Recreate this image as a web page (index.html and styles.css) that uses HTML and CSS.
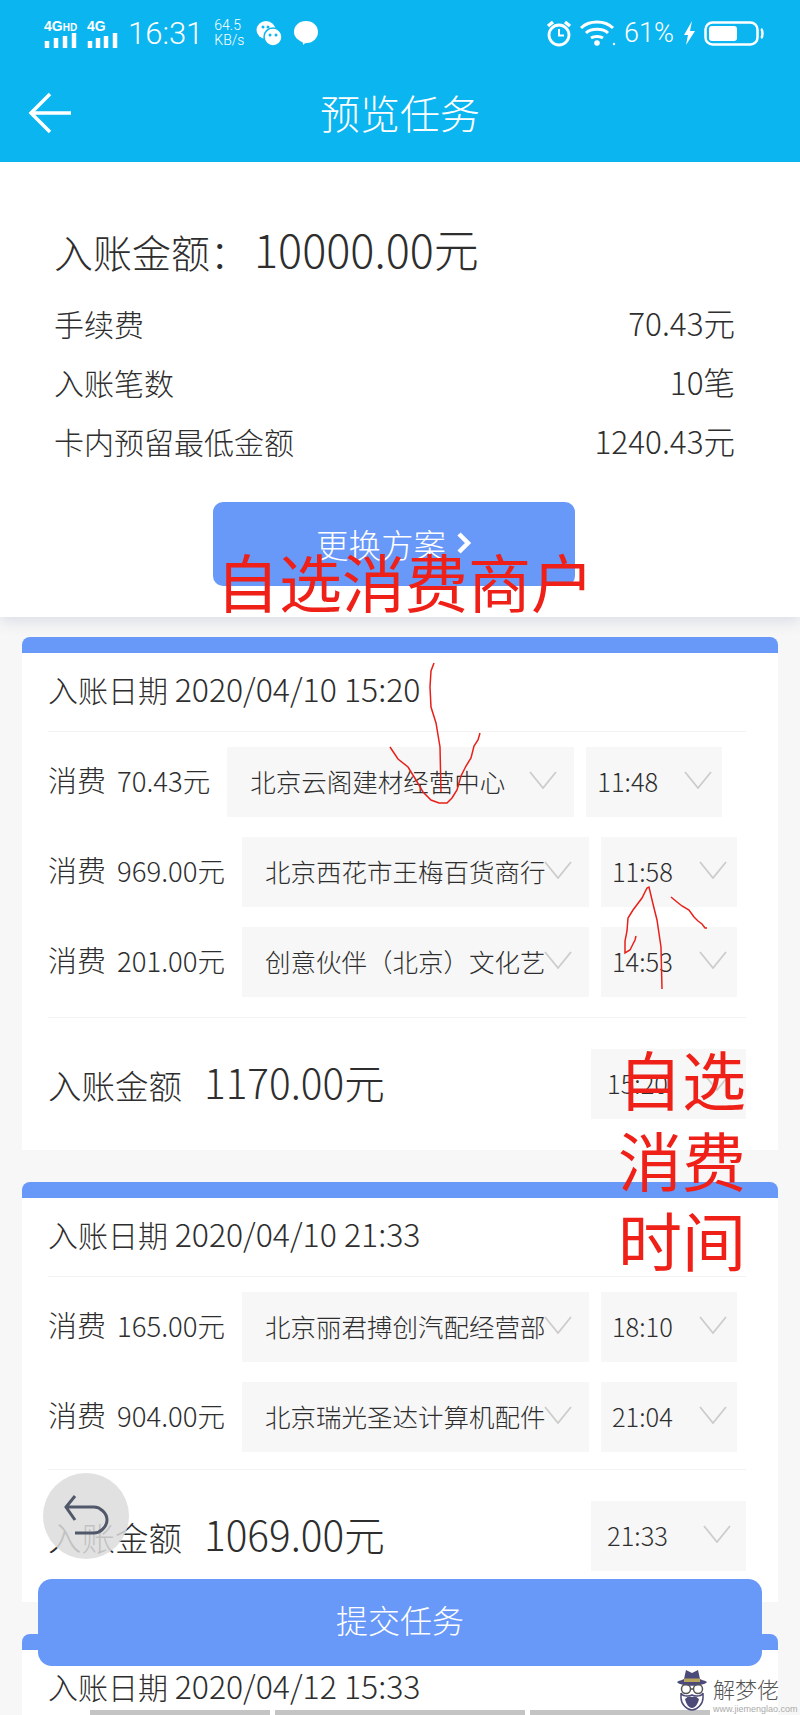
FILE: index.html
```html
<!DOCTYPE html>
<html lang="zh-CN">
<head>
  <meta charset="UTF-8">
  <title>预览任务</title>
  <link rel="stylesheet" href="styles.css">
</head>
<body>
  <div class="page">
    <div class="top-bar">
      <div class="status-bar">
        <div class="status-left">
          <div class="signal"><span class="signal-label">4G<small>HD</small></span>
            <svg width="34" height="15" viewBox="0 0 34 15"><path d="M3 15V8M12 15V5M21 15V3M30 15V0" stroke="#fff" stroke-width="4.500"/></svg>
          </div>
          <div class="signal"><span class="signal-label">4G</span>
            <svg width="32" height="15" viewBox="0 0 32 15"><path d="M3 15V8M11 15V5M19 15V3M28 15V0" stroke="#fff" stroke-width="4.500"/></svg>
          </div>
          <span class="clock">16:31</span>
          <span class="speed">64.5<br>KB/s</span>
          <svg class="wechat" width="26" height="27" viewBox="0 0 26 27"><ellipse cx="10" cy="10" rx="9.500" ry="9" fill="#fff"/><ellipse cx="17" cy="17" rx="9" ry="9" fill="#fff" stroke="#0bb5f0" stroke-width="1.500"/><circle cx="7" cy="7" r="1.500" fill="#0bb5f0"/><circle cx="12" cy="7" r="1.500" fill="#0bb5f0"/><circle cx="14" cy="15" r="1.500" fill="#0bb5f0"/><circle cx="20" cy="15" r="1.500" fill="#0bb5f0"/></svg>
          <svg class="bubble" width="26" height="26" viewBox="0 0 26 26"><path d="M13 1c7 0 12 4.700 12 11 0 6-5 11-11 11-1 0-2 0-3 1l-1 1c0-1 0-3-1-3-4-2-8-5-8-10C1 5.700 6 1 13 1z" fill="#fff"/></svg>
        </div>
        <div class="status-right">
          <svg width="26" height="27" viewBox="0 0 26 27"><circle cx="13" cy="15" r="10" fill="none" stroke="#fff" stroke-width="2.800"/><path d="M13 9v6.500h5" fill="none" stroke="#fff" stroke-width="2"/><path d="M2 6l5-4M24 6l-5-4" stroke="#fff" stroke-width="3.500"/></svg>
          <svg width="36" height="26" viewBox="0 0 36 26"><path d="M1 8c8-8 24-8 32 0M6 13c5-5 17-5 22 0M11 18c3-2 9-2 12 0" fill="none" stroke="#fff" stroke-width="3"/><circle cx="17" cy="23" r="2.800" fill="#fff"/><circle cx="34" cy="24" r="1.200" fill="#fff"/></svg>
          <span class="battery-pct">61%</span>
          <svg class="bolt" width="13" height="24" viewBox="0 0 13 24"><path d="M9 0L1 14h4l-2 10 9-14H7z" fill="#fff"/></svg>
          <svg width="60" height="25" viewBox="0 0 60 25"><rect x="1.500" y="1.500" width="52" height="22" rx="7" fill="none" stroke="#fff" stroke-width="2.500"/><rect x="5" y="5" width="28" height="15" rx="3" fill="#fff"/><path d="M57 8c2 1 2 8 0 9" fill="none" stroke="#fff" stroke-width="2.500"/></svg>
        </div>
      </div>
      <div class="nav-bar">
        <svg class="nav-back" width="44" height="42" viewBox="0 0 44 42"><path d="M22 2L3 21l19 19M3 21h40" fill="none" stroke="#fff" stroke-width="3.500"/></svg>
        <div class="nav-title">预览任务</div>
      </div>
    </div>

    <div class="summary">
      <div class="summary-total">入账金额：<span>10000.00元</span></div>
      <div class="summary-row"><span>手续费</span><span class="summary-value">70.43元</span></div>
      <div class="summary-row"><span>入账笔数</span><span class="summary-value">10笔</span></div>
      <div class="summary-row"><span>卡内预留最低金额</span><span class="summary-value">1240.43元</span></div>
      <div class="swap-btn">更换方案
        <svg width="16" height="22" viewBox="0 0 16 22"><path d="M3 2l9 9-9 9" fill="none" stroke="#fff" stroke-width="4.500"/></svg>
      </div>
    </div>

    <div class="list">
      <div class="task-card">
        <div class="card-date">入账日期 <span>2020/04/10 15:20</span></div>
        <div class="spend-list">
          <div class="spend-row">
            <div class="spend-label">消费<span>70.43元</span></div>
            <div class="picker picker-shop"><span class="picker-text">北京云阁建材经营中心</span><svg class="chev" viewBox="0 0 28 18"><path d="M1 1l13 16L27 1" fill="none" stroke="#ccc" stroke-width="1.800"/></svg></div>
            <div class="picker picker-time"><span class="picker-text">11:48</span><svg class="chev" viewBox="0 0 28 18"><path d="M1 1l13 16L27 1" fill="none" stroke="#ccc" stroke-width="1.800"/></svg></div>
          </div>
          <div class="spend-row">
            <div class="spend-label">消费<span>969.00元</span></div>
            <div class="picker picker-shop"><span class="picker-text">北京西花市王梅百货商行</span><svg class="chev" viewBox="0 0 28 18"><path d="M1 1l13 16L27 1" fill="none" stroke="#ccc" stroke-width="1.800"/></svg></div>
            <div class="picker picker-time"><span class="picker-text">11:58</span><svg class="chev" viewBox="0 0 28 18"><path d="M1 1l13 16L27 1" fill="none" stroke="#ccc" stroke-width="1.800"/></svg></div>
          </div>
          <div class="spend-row">
            <div class="spend-label">消费<span>201.00元</span></div>
            <div class="picker picker-shop"><span class="picker-text">创意伙伴（北京）文化艺</span><svg class="chev" viewBox="0 0 28 18"><path d="M1 1l13 16L27 1" fill="none" stroke="#ccc" stroke-width="1.800"/></svg></div>
            <div class="picker picker-time"><span class="picker-text">14:53</span><svg class="chev" viewBox="0 0 28 18"><path d="M1 1l13 16L27 1" fill="none" stroke="#ccc" stroke-width="1.800"/></svg></div>
          </div>
        </div>
        <div class="card-total">
          <div class="total-label">入账金额<span>1170.00元</span></div>
          <div class="picker picker-total"><span class="picker-text">15:20</span><svg class="chev" viewBox="0 0 28 18"><path d="M1 1l13 16L27 1" fill="none" stroke="#ccc" stroke-width="1.800"/></svg></div>
        </div>
      </div>

      <div class="task-card">
        <div class="card-date">入账日期 <span>2020/04/10 21:33</span></div>
        <div class="spend-list spend-list-short">
          <div class="spend-row">
            <div class="spend-label">消费<span>165.00元</span></div>
            <div class="picker picker-shop"><span class="picker-text">北京丽君搏创汽配经营部</span><svg class="chev" viewBox="0 0 28 18"><path d="M1 1l13 16L27 1" fill="none" stroke="#ccc" stroke-width="1.800"/></svg></div>
            <div class="picker picker-time"><span class="picker-text">18:10</span><svg class="chev" viewBox="0 0 28 18"><path d="M1 1l13 16L27 1" fill="none" stroke="#ccc" stroke-width="1.800"/></svg></div>
          </div>
          <div class="spend-row">
            <div class="spend-label">消费<span>904.00元</span></div>
            <div class="picker picker-shop"><span class="picker-text">北京瑞光圣达计算机配件</span><svg class="chev" viewBox="0 0 28 18"><path d="M1 1l13 16L27 1" fill="none" stroke="#ccc" stroke-width="1.800"/></svg></div>
            <div class="picker picker-time"><span class="picker-text">21:04</span><svg class="chev" viewBox="0 0 28 18"><path d="M1 1l13 16L27 1" fill="none" stroke="#ccc" stroke-width="1.800"/></svg></div>
          </div>
        </div>
        <div class="card-total">
          <div class="total-label">入账金额<span>1069.00元</span></div>
          <div class="picker picker-total"><span class="picker-text">21:33</span><svg class="chev" viewBox="0 0 28 18"><path d="M1 1l13 16L27 1" fill="none" stroke="#ccc" stroke-width="1.800"/></svg></div>
        </div>
      </div>

      <div class="task-card">
        <div class="card-date card-date-open">入账日期 <span>2020/04/12 15:33</span></div>
        <div class="stub-row">
          <div class="stub stub-a"></div>
          <div class="stub stub-b"></div>
          <div class="stub stub-a"></div>
        </div>
      </div>
    </div>

    <!-- marks drawn on top of the screenshot -->
    <svg class="scribble" width="800" height="1715" viewBox="0 0 800 1715">
      <path d="M434 663l-3 8-1 16 1 20 5 16 4 24 1 45M390 747l8 12 10 8 8 13 7 12 8 8 8 3 8 0 5-5 5-8 4-14 5-10 5-8 3-12 4-6 2-7M662 989l-1-42-4-27-4-16-4-17-2 1-5 10-9 12-5 8-1 13-2 10 0 12 5-3 2-4 3-6 1-4M671 897l6 5 5 4 7 4 5 7 4 4 4 3 3 4 2 0" fill="none" stroke="#e8201a" stroke-width="1.500"/>
    </svg>
    <div class="note note-shop">自选消费商户</div>
    <div class="note note-time">自选<br>消费<br>时间</div>

    <div class="float-back">
      <svg width="46" height="42" viewBox="0 0 46 42"><path d="M12 1L3 12l9 13M3 12h28c6 0 13 6 13 13s-7 13-13 13H12" fill="none" stroke="#50586a" stroke-width="3"/></svg>
    </div>
    <div class="submit-btn">提交任务</div>
    <div class="watermark">
      <svg width="32" height="43" viewBox="0 0 32 43"><path d="M1 14c3-2 6-2 7-3l2-9 6 3 6-3 2 9c1 1 4 1 7 3-4 5-26 5-30 0z" fill="#4b4a78"/><path d="M8 10.500h16v3.500H8z" fill="#b9a45c"/><circle cx="10" cy="21" r="4.500" fill="none" stroke="#555" stroke-width="1.500"/><circle cx="22" cy="21" r="4.500" fill="none" stroke="#555" stroke-width="1.500"/><path d="M14.500 21h3" stroke="#555" stroke-width="1.500"/><path d="M5 25v5c0 6 6 12 11 12s11-6 11-12v-5c-1 3-7 4-11 2-4 2-10 1-11-2z" fill="none" stroke="#4b4a78" stroke-width="1.500"/><path d="M9 31c3-3 5-3 7-2 2-1 4-1 7 2-1 5-4 9-7 9s-6-4-7-9z" fill="#4b4a78"/></svg>
      <div class="watermark-text">
        <div class="watermark-name">解梦佬</div>
        <div class="watermark-url">www.jiemenglao.com</div>
      </div>
    </div>
  </div>
</body>
</html>
```

FILE: styles.css
```css
* {
  box-sizing: border-box;
}
html, body {
  margin: 0;
  padding: 0;
}
body {
  background: #f7f7f7;
  color: #2e2e2e;
  font-family: "Noto Sans CJK SC", "Noto Sans", sans-serif;
  font-weight: 300;
}
.page {
  position: relative;
  width: 800px;
  height: 1715px;
  overflow: hidden;
}

/* top */
.top-bar {
  position: relative;
  z-index: 1;
  height: 162px;
  background: #0bb5f0;
  color: #fff;
}
.status-bar {
  height: 62px;
  padding: 4px 36px 0 44px;
  display: flex;
  justify-content: space-between;
  align-items: center;
}
.status-left, .status-right {
  display: flex;
  align-items: center;
  gap: 8px;
}
.signal {
  display: flex;
  flex-direction: column;
  line-height: 1;
  margin-right: 1px;
}
.signal-label {
  font-family: "Liberation Sans", sans-serif;
  font-size: 14px;
  font-weight: 700;
}
.signal-label small {
  font-size: 10px;
}
.clock {
  font-family: Roboto, sans-serif;
  font-size: 31px;
  font-weight: 300;
}
.speed {
  font-family: Roboto, sans-serif;
  font-size: 14px;
  line-height: 15px;
  margin: 0 4px 0 3px;
}
.bubble {
  margin-left: 3px;
}
.battery-pct {
  font-family: Roboto, sans-serif;
  font-size: 27px;
  font-weight: 300;
}
.bolt {
  margin-left: 1px;
}
.nav-bar {
  height: 100px;
  position: relative;
  display: flex;
  align-items: center;
  justify-content: center;
}
.nav-back {
  position: absolute;
  left: 28px;
  top: 30px;
}
.nav-title {
  font-size: 40px;
}

/* summary */
.summary {
  background: #fff;
  height: 455px;
  padding: 57px 65px 0 54px;
  box-shadow: 0 4px 14px #d8dce4;
  position: relative;
}
.summary-total {
  font-size: 39px;
  line-height: 60px;
  margin-bottom: 12px;
}
.summary-total span {
  font-size: 45px;
  margin-left: 5px;
}
.summary-row {
  display: flex;
  justify-content: space-between;
  align-items: baseline;
  font-size: 30px;
  line-height: 58px;
}
.summary-value {
  font-size: 31.500px;
}
.swap-btn {
  position: absolute;
  left: 213px;
  top: 340px;
  width: 362px;
  height: 84px;
  padding-bottom: 2px;
  background: #6898f8;
  border-radius: 10px;
  color: #fff;
  font-size: 32.500px;
  display: flex;
  align-items: center;
  justify-content: center;
  gap: 10px;
}

/* cards */
.list {
  padding: 20px 22px 0;
  display: flex;
  flex-direction: column;
  gap: 32px;
}
.task-card {
  background: #fff;
  border-top: 16px solid #6898f8;
  border-radius: 8px 8px 0 0;
  padding: 0 32px 31px 26px;
}
.card-date {
  height: 79px;
  font-size: 30px;
  line-height: 71px;
  border-bottom: 1px solid #f2f2f2;
}
.card-date span {
  font-size: 32px;
}
.card-date-open {
  height: 60px;
  border-bottom: 0;
}
.spend-list {
  padding: 15px 0 20px;
  display: flex;
  flex-direction: column;
  gap: 20px;
  border-bottom: 1px solid #f2f2f2;
}
.spend-list-short {
  padding-bottom: 17px;
}
.spend-row {
  display: flex;
  align-items: center;
  gap: 17px;
}
.spend-label {
  font-size: 29px;
  line-height: 64px;
  height: 70px;
  flex: none;
}
.spend-label span {
  font-size: 27.500px;
  margin-left: 11px;
}
.picker {
  height: 70px;
  padding-bottom: 4px;
  background: #f7f7f7;
  display: flex;
  align-items: center;
  flex: none;
  font-size: 25.500px;
}
.picker-text {
  flex: 1;
  min-width: 0;
  white-space: nowrap;
}
.picker-shop {
  width: 347px;
  padding-left: 23px;
  padding-right: 17px;
}
.picker-time {
  width: 136px;
  margin-left: -5px;
  padding-left: 11px;
  padding-right: 10px;
}
.picker-total {
  width: 155px;
  padding-left: 16px;
  padding-right: 15px;
}
.chev {
  width: 28px;
  height: 18px;
  flex: none;
}
.card-total {
  display: flex;
  justify-content: space-between;
  align-items: center;
  padding-top: 31px;
}
.total-label {
  font-size: 33.500px;
  padding-bottom: 6px;
}
.total-label span {
  font-size: 40.500px;
  margin-left: 22px;
}
.stub-row {
  display: flex;
  justify-content: center;
  gap: 5px;
  padding-left: 6px;
}
.stub {
  height: 6px;
  background: #c4c4c4;
}
.stub-a {
  width: 180px;
}
.stub-b {
  width: 250px;
}

/* things lying over the page */
.scribble {
  position: absolute;
  z-index: 2;
  left: 0;
  top: 0;
}
.note {
  position: absolute;
  z-index: 2;
  color: #ee2018;
  font-weight: 400;
}
.note-shop {
  left: 216px;
  top: 540px;
  font-size: 63px;
  line-height: 80px;
  white-space: nowrap;
}
.note-time {
  left: 618px;
  top: 1037px;
  font-size: 64px;
  line-height: 80.500px;
}
.float-back {
  position: absolute;
  z-index: 2;
  left: 43px;
  top: 1473px;
  width: 86px;
  height: 86px;
  border-radius: 50%;
  background: #dcdcdcd8;
  display: flex;
  align-items: center;
  justify-content: center;
}
.submit-btn {
  position: absolute;
  z-index: 2;
  left: 38px;
  top: 1579px;
  width: 724px;
  height: 87px;
  padding-bottom: 7px;
  border-radius: 14px;
  background: #6898f8;
  color: #fff;
  font-size: 32px;
  display: flex;
  align-items: center;
  justify-content: center;
}
.watermark {
  position: absolute;
  z-index: 2;
  left: 676px;
  top: 1668px;
  display: flex;
  gap: 5px;
  color: #555;
}
.watermark-name {
  font-size: 22px;
  line-height: 32px;
  margin-top: 4px;
}
.watermark-url {
  font-family: "Liberation Sans", sans-serif;
  font-size: 9px;
  color: #aaa;
  white-space: nowrap;
}
```
